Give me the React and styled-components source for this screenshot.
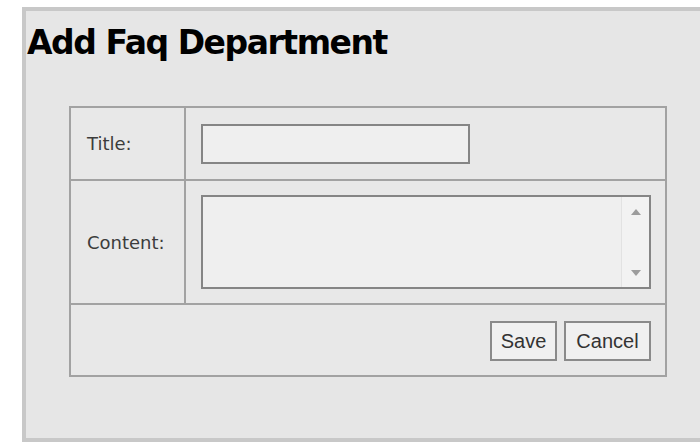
import styled, { createGlobalStyle } from "styled-components";

const GlobalStyle = createGlobalStyle`
  html, body {
    margin: 0;
    padding: 0;
    background: #ffffff;
    overflow: hidden;
  }
  * {
    box-sizing: border-box;
  }
`;

const Page = styled.div`
  padding: 7px 0 0 22px;
  width: 700px;
  height: 444px;
`;

const Panel = styled.div`
  width: 700px;
  height: 435px;
  background: #e6e6e6;
  border: 4px solid #c8c8c8;
  border-right: none;
`;

const Heading = styled.h1`
  margin: 13px 0 0 0;
  padding-left: 1px;
  font-family: "DejaVu Sans", Verdana, sans-serif;
  font-weight: bold;
  font-size: 33px;
  letter-spacing: -1.45px;
  line-height: 38px;
  color: #000;
`;

const FormTable = styled.div`
  margin: 44px 0 0 43px;
  width: 598px;
  border: 2px solid #a2a2a2;
  background: #e8e8e8;
`;

const Row = styled.div`
  display: grid;
  grid-template-columns: 115px 1fr;
  min-height: ${(p) => p.$h}px;
  border-top: ${(p) => (p.$first ? "none" : "2px solid #a2a2a2")};
`;

const Label = styled.div`
  display: flex;
  align-items: center;
  padding-left: 16px;
  border-right: 2px solid #a2a2a2;
  font-family: "DejaVu Sans", Verdana, sans-serif;
  font-size: 18px;
  color: #3c3c3c;
`;

const Field = styled.div`
  display: flex;
  align-items: center;
  justify-content: ${(p) => (p.$end ? "flex-end" : "flex-start")};
  gap: 7px;
  padding: ${(p) => (p.$end ? "2px" : "0")} 14px 0 15px;
  ${(p) => p.$span && "grid-column: 1 / -1;"}
`;

const TextInput = styled.input`
  width: 269px;
  height: 40px;
  border: 2px solid #858585;
  background: #efefef;
  outline: none;
  font-family: "Liberation Sans", Arial, sans-serif;
  font-size: 18px;
  padding: 0 6px;
`;

const AreaBox = styled.div`
  display: flex;
  width: 450px;
  height: 94px;
  border: 2px solid #858585;
  background: #efefef;
`;

const Area = styled.textarea`
  flex: 1;
  border: none;
  resize: none;
  outline: none;
  background: transparent;
  overflow: hidden;
  font-family: "Liberation Sans", Arial, sans-serif;
  font-size: 18px;
  padding: 4px 6px;
`;

const ScrollTrack = styled.div`
  width: 28px;
  border-left: 1px solid #e2e2e2;
  background: #f2f2f2;
  display: flex;
  flex-direction: column;
  justify-content: space-between;
  align-items: center;
  padding: 12px 0 11px 1px;
`;

const Arrow = styled.span`
  width: 0;
  height: 0;
  border-left: 5px solid transparent;
  border-right: 5px solid transparent;
  ${(p) =>
    p.$down
      ? "border-top: 6px solid #9c9c9c;"
      : "border-bottom: 6px solid #9c9c9c;"}
`;

const Button = styled.button`
  width: ${(p) => p.$w}px;
  height: 40px;
  padding: 0;
  border: 2px solid #8a8a8a;
  background: #f0f0f0;
  font-family: "Liberation Sans", Arial, sans-serif;
  font-size: 20px;
  color: #333;
`;

export default function App() {
  return (
    <>
      <GlobalStyle />
      <Page>
        <Panel>
          <Heading>Add Faq Department</Heading>
          <FormTable>
            <Row $first $h={71}>
              <Label>Title:</Label>
              <Field>
                <TextInput type="text" />
              </Field>
            </Row>
            <Row $h={124}>
              <Label>Content:</Label>
              <Field>
                <AreaBox>
                  <Area />
                  <ScrollTrack>
                    <Arrow />
                    <Arrow $down />
                  </ScrollTrack>
                </AreaBox>
              </Field>
            </Row>
            <Row $h={72}>
              <Field $span $end>
                <Button $w={67}>Save</Button>
                <Button $w={87}>Cancel</Button>
              </Field>
            </Row>
          </FormTable>
        </Panel>
      </Page>
    </>
  );
}
